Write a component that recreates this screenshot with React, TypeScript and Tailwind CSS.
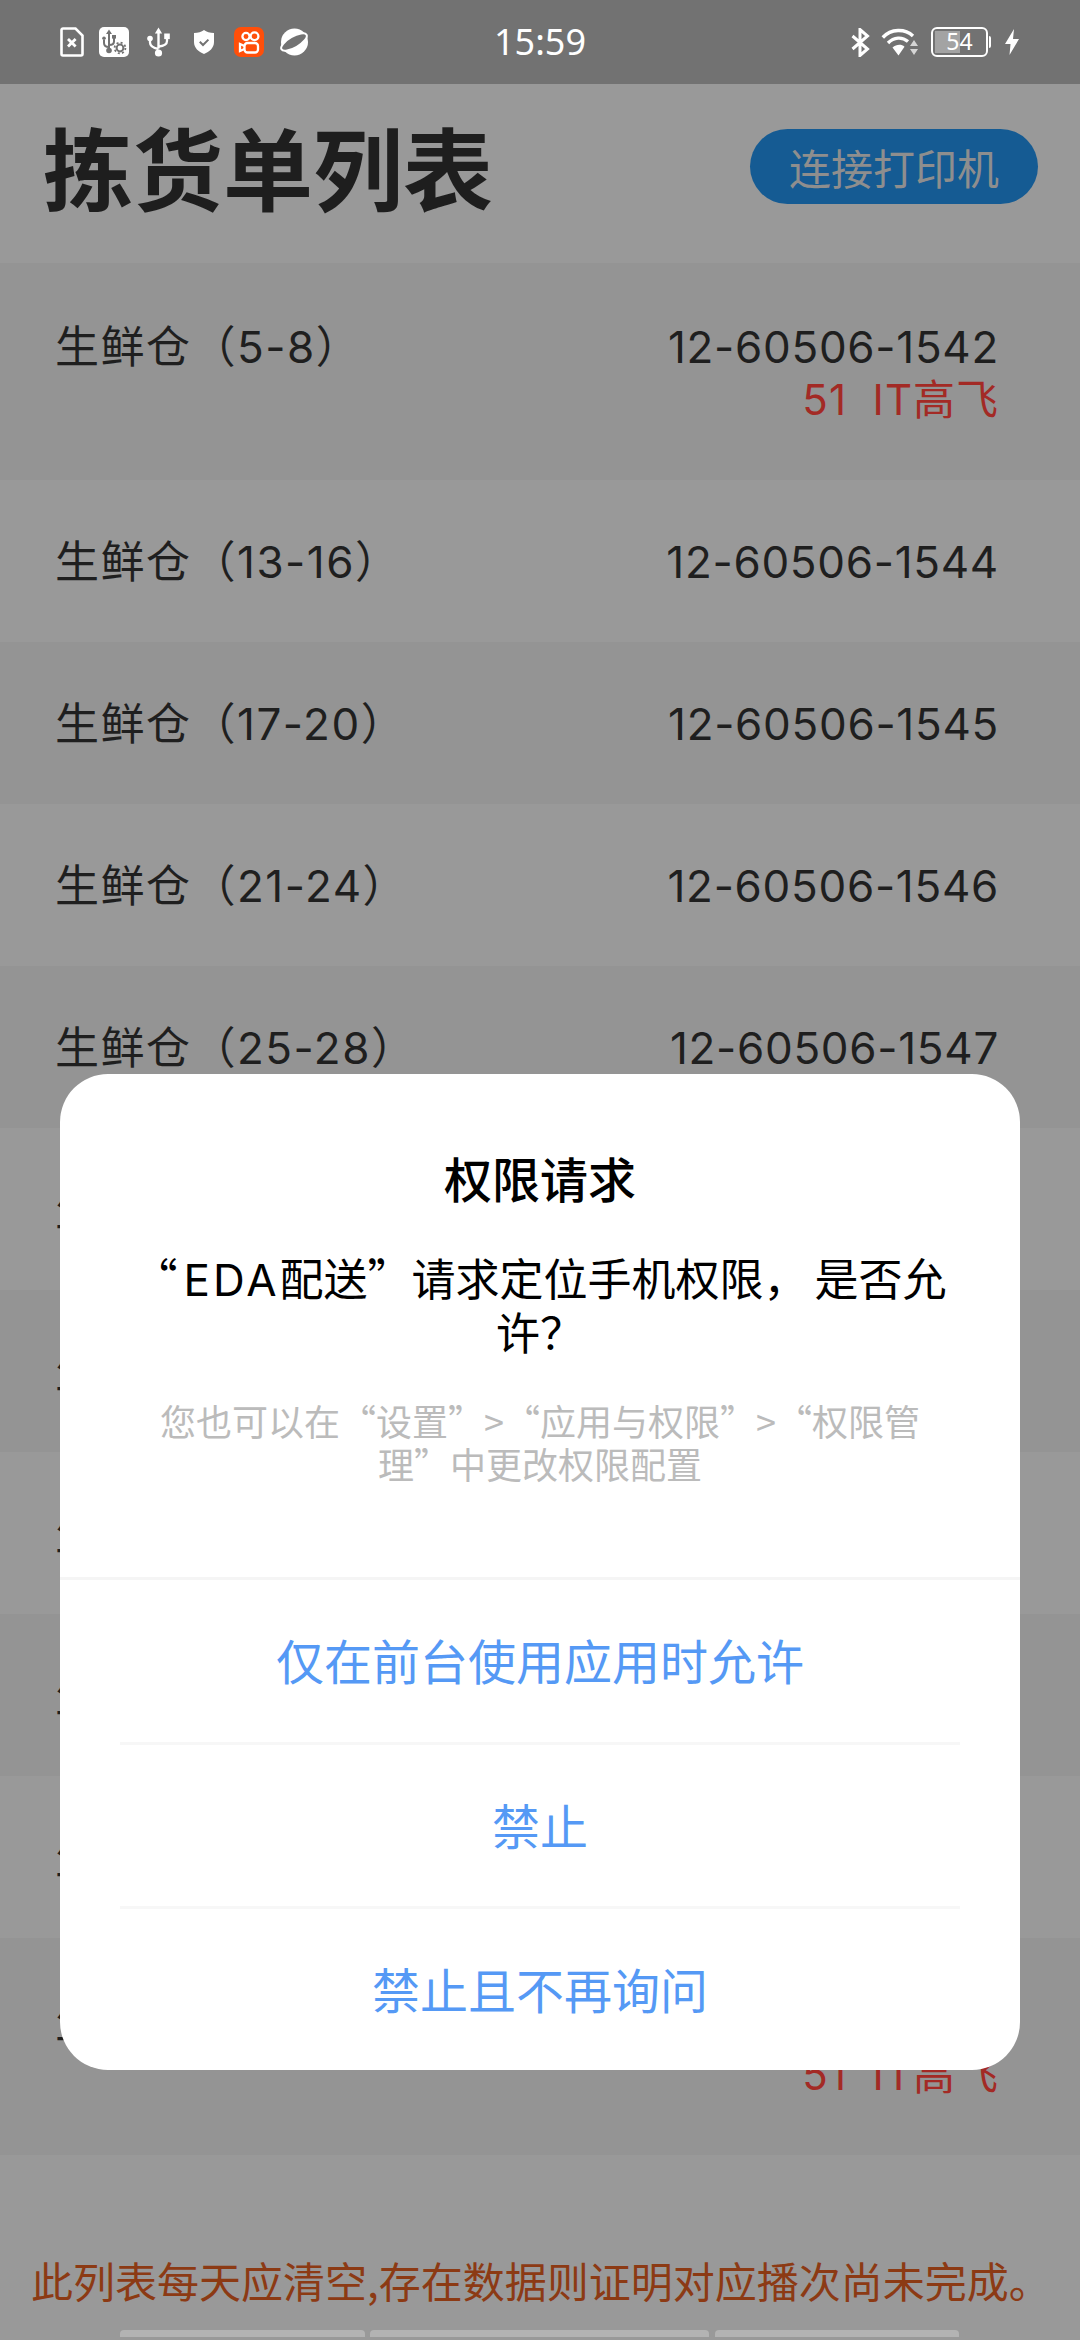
import React from "react";

const cjk = { fontFamily: '"Noto Sans CJK SC", "Noto Sans", sans-serif' };
const mixed = { fontFamily: 'Inter, "Noto Sans CJK SC", sans-serif' };

const rows: { name: string; no: string; who?: string }[] = [
  { name: "生鲜仓（5-8）", no: "12-60506-1542", who: "51  IT高飞" },
  { name: "生鲜仓（13-16）", no: "12-60506-1544" },
  { name: "生鲜仓（17-20）", no: "12-60506-1545" },
  { name: "生鲜仓（21-24）", no: "12-60506-1546" },
  { name: "生鲜仓（25-28）", no: "12-60506-1547" },
  { name: "生鲜仓（29-32）", no: "12-60506-1548" },
  { name: "生鲜仓（33-36）", no: "12-60506-1549" },
  { name: "生鲜仓（37-40）", no: "12-60506-1550" },
  { name: "生鲜仓（41-44）", no: "12-60506-1551" },
  { name: "生鲜仓（45-48）", no: "12-60506-1552" },
  { name: "生鲜仓（49-52）", no: "12-60506-1553", who: "51  IT高飞" },
];

function LeftIcons() {
  return (
    <div className="flex items-center">
      <svg width="24" height="30" viewBox="0 0 24 30" className="ml-[60px]">
        <path d="M3 1.500H15.500L22.500 8.500V27a1.500 1.500 0 0 1-1.500 1.500H3A1.500 1.500 0 0 1 1.500 27V3A1.500 1.500 0 0 1 3 1.500Z" fill="none" stroke="#fff" strokeWidth="2.600" />
        <path d="M8 12l7.600 7.600M15.600 12L8 19.600" stroke="#fff" strokeWidth="2.800" />
      </svg>
      <svg width="30" height="30" viewBox="0 0 30 30" className="ml-[15px]">
        <rect width="30" height="30" rx="5" fill="#fff" />
        <path d="M10 2.500l3 4.500h-2v14H9V7H7Z" fill="#727272" />
        <path d="M10 20c-3.500 0-5-2-5-4v-3M10 18c3.500 0 5-1 5-3.500V11" fill="none" stroke="#727272" strokeWidth="2" />
        <rect x="3.200" y="9.500" width="3.600" height="3.600" rx="1.800" fill="#727272" />
        <rect x="13" y="8" width="4" height="3.600" fill="#727272" />
        <circle cx="10" cy="23.500" r="2.800" fill="#727272" />
        <circle cx="21" cy="21" r="3.400" fill="none" stroke="#727272" strokeWidth="2" />
        <circle cx="21" cy="21" r="5.400" fill="none" stroke="#727272" strokeWidth="1.800" strokeDasharray="2 2.240" />
      </svg>
      <svg width="23" height="30" viewBox="0 0 23 30" className="ml-[18px]">
        <path d="M11.500 0.500l3.600 6h-2.400v15h-2.400v-15H7.900Z" fill="#fff" />
        <path d="M11.500 22c-5.500-1-8.500-3-8.500-6.500V13M11.500 19.500c5.500-.5 8.500-2 8.500-5.500V10" fill="none" stroke="#fff" strokeWidth="2.300" />
        <circle cx="3" cy="11.500" r="2.800" fill="#fff" />
        <rect x="17.200" y="6.500" width="5.600" height="5.600" fill="#fff" />
        <circle cx="11.500" cy="26" r="3.600" fill="#fff" />
      </svg>
      <svg width="20" height="24" viewBox="0 0 20 24" className="ml-[24px]">
        <path d="M10 0C12.500 2 16 3 20 3V12C20 18 15.500 21.800 10 24C4.500 21.800 0 18 0 12V3C4 3 7.500 2 10 0Z" fill="#fff" />
        <path d="M5.800 11.800l3.200 3.200 5.400-5.400" fill="none" stroke="#727272" strokeWidth="2" />
      </svg>
      <svg width="30" height="30" viewBox="0 0 30 30" className="ml-[20px]">
        <rect width="30" height="30" rx="7" fill="#ff4f0a" />
        <g fill="none" stroke="#fff" strokeWidth="2.300">
          <circle cx="12" cy="9.500" r="3.600" />
          <circle cx="20.500" cy="9.300" r="3.900" />
          <rect x="10.500" y="16" width="13.500" height="9.500" rx="3" />
          <path d="M10.500 19L6 17v7l4.500-2" />
        </g>
      </svg>
      <svg width="30" height="28" viewBox="0 0 30 28" className="ml-[15px]">
        <circle cx="15.500" cy="14" r="13.500" fill="#fff" />
        <ellipse cx="15" cy="14" rx="14.500" ry="5.500" transform="rotate(-30 15 14)" fill="#727272" stroke="#fff" strokeWidth="2" />
      </svg>
    </div>
  );
}

function RightIcons() {
  return (
    <div className="flex items-center justify-end">
      <svg width="19" height="29" viewBox="0 0 19 29">
        <path d="M1.500 8l15 13-7.500 6.500V1.500L16.500 8l-15 13" fill="none" stroke="#fff" strokeWidth="3" />
      </svg>
      <svg width="38" height="28" viewBox="0 0 38 28" className="ml-[11px]">
        <g fill="none" stroke="#fff" strokeWidth="3.400">
          <path d="M1.800 9.500C10 .5 24 .5 32 8" />
          <path d="M7 15c6-6 14-6.500 20-1.500" />
        </g>
        <path d="M11.500 19.500c4-3.500 9-3.500 12-.8L17.500 27.500Z" fill="#fff" />
        <path d="M33 12l4 6h-8ZM29 21h8l-4 6Z" fill="#d5d5d5" />
      </svg>
      <div className="relative ml-[12px] h-[30px] w-[57px] rounded-[6px] border-[2.500px] border-white">
        <div className="absolute inset-y-[2px] left-[2px] w-[25px] bg-[#a3a3a3]" />
        <div className="relative text-center text-[23px] leading-[25px] text-white" style={{ fontFamily: '"Noto Sans", sans-serif' }}>
          54
        </div>
      </div>
      <div className="ml-[1px] h-[12px] w-[2px] rounded-r bg-white" />
      <svg width="14" height="26" viewBox="0 0 14 26" className="ml-[14px] mr-[61px]">
        <path d="M9 0L0 15h5.500L4.500 26 14 10H8Z" fill="#fff" />
      </svg>
    </div>
  );
}

function StatusBar() {
  return (
    <div className="grid h-[84px] grid-cols-[1fr_auto_1fr] items-center bg-[#727272]">
      <LeftIcons />
      <div className="text-[36px] leading-[40px] text-white" style={{ fontFamily: '"Noto Sans", sans-serif' }}>
        15:59
      </div>
      <RightIcons />
    </div>
  );
}

function Row({ r, i }: { r: (typeof rows)[number]; i: number }) {
  return (
    <div className={`flex justify-between pl-[55px] pr-[81px] ${r.who ? "h-[217px] pt-[56px]" : "h-[162px] pt-[54px]"} ${i % 2 === 0 ? "bg-[#949494]" : "bg-[#999999]"}`} style={mixed}>
      <div className="text-[44px] leading-[56px] tracking-[1.500px] text-[#1f1f1f]">{r.name}</div>
      <div className="text-right">
        <div className="text-[44px] leading-[56px] tracking-[0.700px] text-[#1f1f1f]">{r.no}</div>
        {r.who && <div className="whitespace-pre text-[42px] leading-[50px] tracking-[1px] text-[#a32a25]">{r.who}</div>}
      </div>
    </div>
  );
}

function Dialog() {
  return (
    <div className="absolute left-[60px] top-[1074px] flex h-[996px] w-[960px] flex-col rounded-[48px] bg-white">
      <div className="h-[503px] text-center">
        <div className="pt-[73px] text-[48px] font-medium leading-[60px] text-black">权限请求</div>
        <div className="mt-[45px] text-[44px] leading-[51px] text-black">
          <span className="mr-[6px]">“</span>
          <span className="tracking-[3px]" style={mixed}>EDA</span>配送”请求定位手机权限<span className="mr-[7px]">，</span>是否允
          <br />
          许？
        </div>
        <div className="mt-[42px] text-[36px] leading-[43px] text-[#bbbbbb]">
          您也可以在“设置”&gt;“应用与权限”&gt;“权限管
          <br />
          理”中更改权限配置
        </div>
      </div>
      <div className="h-[3px] bg-[#f5f5f5]" />
      <div className="flex h-[162px] items-center justify-center pb-[4px] text-[48px] text-[#5599f5]">仅在前台使用应用时允许</div>
      <div className="mx-[60px] h-[3px] bg-[#f7f7f7]" />
      <div className="flex h-[161px] items-center justify-center pb-[4px] text-[48px] text-[#5599f5]">禁止</div>
      <div className="mx-[60px] h-[3px] bg-[#f7f7f7]" />
      <div className="flex flex-1 items-center justify-center pb-[4px] text-[48px] text-[#5599f5]">禁止且不再询问</div>
    </div>
  );
}

export default function App() {
  return (
    <div lang="zh-Hans" className="relative flex h-[2340px] w-[1080px] flex-col overflow-hidden bg-[#999999]" style={cjk}>
      <StatusBar />
      <div className="flex h-[179px] items-center justify-between pb-[14px] pl-[43px] pr-[42px]">
        <div className="-mt-[4px] text-[90px] font-bold leading-[100px] text-[#1e1e1e]">拣货单列表</div>
        <div className="flex h-[75px] w-[288px] items-center justify-center rounded-full bg-[#155b93] text-[42px] text-[#8e8e8e]">连接打印机</div>
      </div>
      <div>
        {rows.map((r, i) => (
          <Row key={r.no} r={r} i={i} />
        ))}
      </div>
      <div className="flex-1" />
      <div className="pb-[24px] pl-[31px] text-[42px] leading-[52px] whitespace-nowrap text-[#8c3a14]">此列表每天应清空,存在数据则证明对应播次尚未完成。</div>
      <div className="flex h-[10px] pl-[120px]">
        <div className="h-[7px] w-[245px] rounded-t-[4px] bg-[#b3b3b3]" />
        <div className="ml-[5px] h-[7px] w-[339px] rounded-t-[4px] bg-[#b3b3b3]" />
        <div className="ml-[6px] h-[7px] w-[244px] rounded-t-[4px] bg-[#b3b3b3]" />
      </div>
      <Dialog />
    </div>
  );
}
